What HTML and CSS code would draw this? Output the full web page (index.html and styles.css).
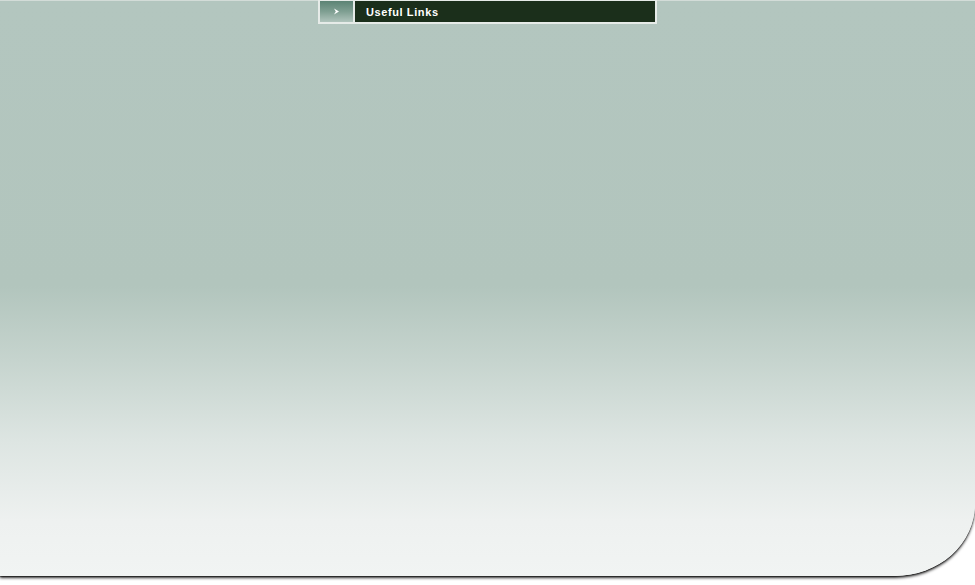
FILE: index.html
```html
<!DOCTYPE html>
<html>
<head>
<meta charset="utf-8">
<link rel="stylesheet" href="styles.css">
</head>
<body>
<div class="page">
  <div class="topbar">
    <div class="tab">
      <div class="tab-icon">
        <svg width="7" height="7" viewBox="0 0 7 7"><path d="M1 0.5 L6 3.5 L1 6.5 L2.8 3.5 Z" fill="#fff"/></svg>
      </div>
      <div class="tab-title">Useful Links</div>
    </div>
  </div>
</div>
</body>
</html>
```
FILE: styles.css
```css
html, body {
  margin: 0;
  padding: 0;
  background: #ffffff;
  overflow: hidden;
}
body {
  font-family: "Liberation Sans", Arial, sans-serif;
  height: 585px;
}
.page {
  width: 975px;
  height: 576px;
  box-sizing: border-box;
  border-top: 1px solid #d3dcd8;
  border-bottom-right-radius: 80px 72px;
  background: linear-gradient(to bottom, #b3c6bf 0px, #b2c5bd 285px, #c6d4ce 360px, #dde5e2 440px, #eef1f0 520px, #f1f4f3 576px);
  box-shadow: 0 2px 3px rgba(0, 0, 0, 0.8), 0 1px 1px rgba(0, 0, 0, 0.5);
}
.topbar {
  display: flex;
  justify-content: flex-start;
  padding-left: 318px;
}
.tab {
  display: flex;
  width: 339px;
  height: 24px;
  box-sizing: border-box;
  border: 2px solid #e6ebe8;
  border-top: 1px solid #e6ebe8;
  background: #e6ebe8;
  gap: 2px;
  margin-top: -1px;
}
.tab-icon {
  width: 33px;
  display: flex;
  align-items: center;
  justify-content: center;
  background: linear-gradient(to bottom, #5c8374, #7f9f92 50%, #b0c4bc);
}
.tab-title {
  flex: 1;
  background: #1b2f1b;
  color: #ffffff;
  font-weight: bold;
  font-size: 11px;
  line-height: 22px;
  padding-left: 11px;
  letter-spacing: 0.6px;
}
```
